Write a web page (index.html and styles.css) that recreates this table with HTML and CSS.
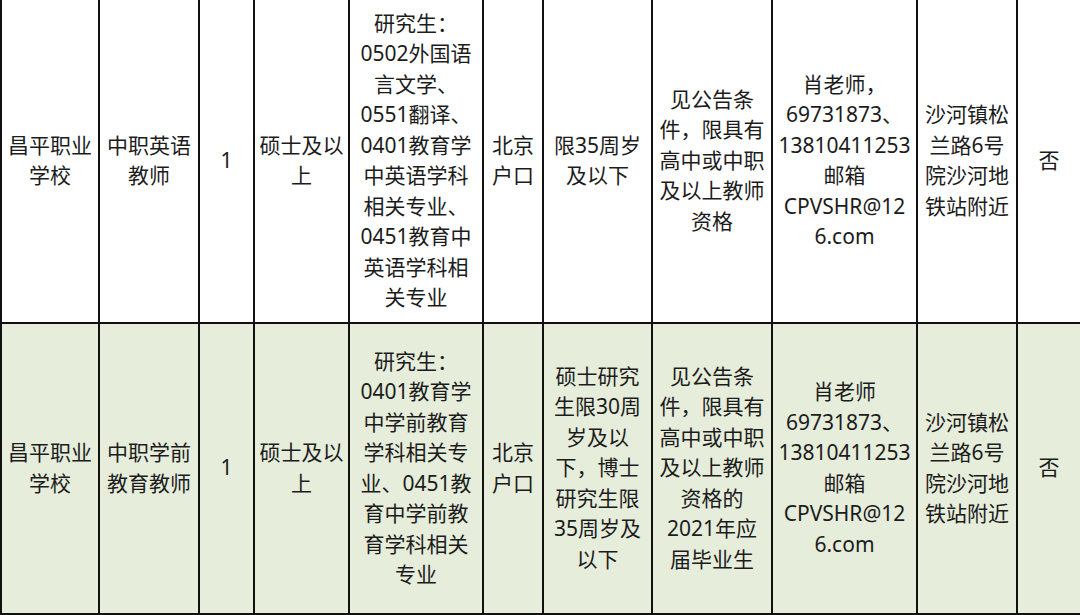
FILE: index.html
```html
<!DOCTYPE html>
<html lang="zh-CN">
<head>
<meta charset="utf-8">
<title>岗位表</title>
<link rel="stylesheet" href="styles.css">
</head>
<body>
<table class="jobs">
  <colgroup>
    <col class="c1"><col class="c2"><col class="c3"><col class="c4"><col class="c5"><col class="c6"><col class="c7"><col class="c8"><col class="c9"><col class="c10"><col class="c11">
  </colgroup>
  <tbody>
    <tr class="row row-a">
      <td>昌平职业<br>学校</td>
      <td>中职英语<br>教师</td>
      <td>1</td>
      <td>硕士及以<br>上</td>
      <td>研究生：<br>0502外国语<br>言文学、<br>0551翻译、<br>0401教育学<br>中英语学科<br>相关专业、<br>0451教育中<br>英语学科相<br>关专业</td>
      <td>北京<br>户口</td>
      <td>限35周岁<br>及以下</td>
      <td>见公告条<br>件，限具有<br>高中或中职<br>及以上教师<br>资格</td>
      <td>肖老师，<br>69731873、<br>13810411253<br>邮箱<br>CPVSHR@12<br>6.com</td>
      <td>沙河镇松<br>兰路6号<br>院沙河地<br>铁站附近</td>
      <td>否</td>
    </tr>
    <tr class="row row-b">
      <td>昌平职业<br>学校</td>
      <td>中职学前<br>教育教师</td>
      <td>1</td>
      <td>硕士及以<br>上</td>
      <td>研究生：<br>0401教育学<br>中学前教育<br>学科相关专<br>业、0451教<br>育中学前教<br>育学科相关<br>专业</td>
      <td>北京<br>户口</td>
      <td>硕士研究<br>生限30周<br>岁及以<br>下，博士<br>研究生限<br>35周岁及<br>以下</td>
      <td>见公告条<br>件，限具有<br>高中或中职<br>及以上教师<br>资格的<br>2021年应<br>届毕业生</td>
      <td>肖老师<br>69731873、<br>13810411253<br>邮箱<br>CPVSHR@12<br>6.com</td>
      <td>沙河镇松<br>兰路6号<br>院沙河地<br>铁站附近</td>
      <td>否</td>
    </tr>
  </tbody>
</table>
</body>
</html>
```

FILE: styles.css
```css
html, body {
  margin: 0;
  padding: 0;
  background: #ffffff;
  overflow: hidden;
}

body {
  width: 1080px;
  height: 615px;
}

.jobs {
  border-collapse: collapse;
  table-layout: fixed;
  width: 1080px;
  margin: -2px 0 0 0;
  font-family: "Noto Sans", "Noto Sans CJK SC", sans-serif;
  font-size: 21px;
  line-height: 30.5px;
  color: #1c1c1c;
}

.jobs td {
  border: 2px solid #111111;
  padding: 0 0 2px 0;
  text-align: center;
  vertical-align: middle;
  white-space: nowrap;
  overflow: hidden;
}

.c1 { width: 98px; }
.c2 { width: 100px; }
.c3 { width: 55px; }
.c4 { width: 95px; }
.c5 { width: 134px; }
.c6 { width: 60px; }
.c7 { width: 109px; }
.c8 { width: 120px; }
.c9 { width: 145px; }
.c10 { width: 100px; }
.c11 { width: 64px; }

.row-a {
  height: 324px;
  background: #ffffff;
}

.row-b {
  height: 291px;
  background: #e6eddb;
}
```
